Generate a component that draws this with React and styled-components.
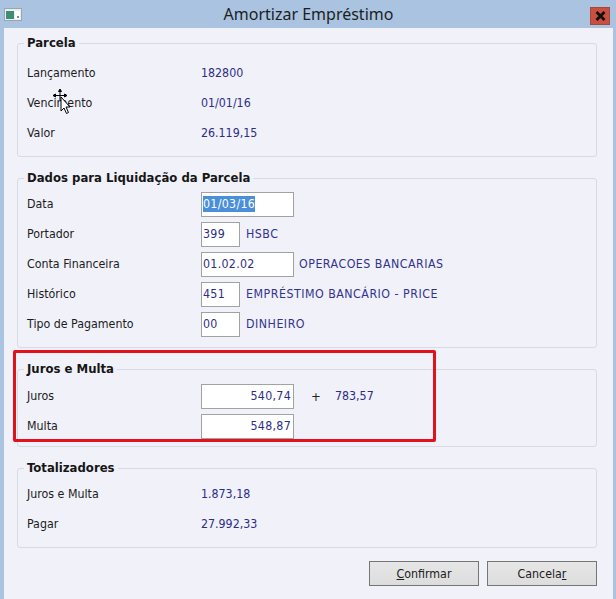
import styled, { createGlobalStyle } from 'styled-components'

const GlobalStyle = createGlobalStyle`
  html, body { margin: 0; padding: 0; background: #f0f1f9; }
`

const Window = styled.div`
  position: relative;
  width: 616px;
  height: 599px;
  box-sizing: border-box;
  background: #f0f1f9;
  border-left: 4px solid #a9c3e1;
  border-right: 3px solid #a9c3e1;
  display: flex;
  flex-direction: column;
  font-family: "DejaVu Sans Condensed", "DejaVu Sans", sans-serif;
  font-size: 12.3px;
  color: #1c1c1c;
  overflow: hidden;
`

const TitleBar = styled.div`
  height: 28px;
  background: #a9c3e1;
  display: grid;
  grid-template-columns: 26px 1fr 26px;
  align-items: center;
`

const Title = styled.div`
  text-align: center;
  font-family: "Noto Sans", "Open Sans", sans-serif;
  font-size: 16px;
  color: #1e1e1e;
  line-height: 28px;
`

const CloseBtn = styled.div`
  justify-self: end;
  margin-right: 3px;
  width: 20px;
  height: 18px;
  margin-top: 4px;
  box-sizing: border-box;
  background: #c9503f;
  border: 1px solid #a8463a;
  display: flex;
  align-items: center;
  justify-content: center;
`

const Content = styled.div`
  padding: 7px 16px 0 13px;
  display: flex;
  flex-direction: column;
  gap: 13px;
`

const Group = styled.fieldset`
  margin: 0;
  min-width: 0;
  padding: ${p => p.$pt}px 9px ${p => p.$pb}px;
  border: 1px solid #d8dae4;
  border-radius: 3px;
`

const Legend = styled.legend`
  padding: 0 3px;
  margin-left: -3px;
  font-weight: bold;
  font-size: 13px;
  line-height: 16px;
  color: #161616;
`

const Row = styled.div`
  display: flex;
  align-items: center;
  height: 30px;
`

const Label = styled.span`
  width: 174px;
  flex: none;
`

const Value = styled.span`
  color: #2d2d86;
`

const Box = styled.div`
  width: ${p => (p.$wide ? 93 : 39)}px;
  height: 25px;
  box-sizing: border-box;
  background: #ffffff;
  border: 1px solid #a2a2a2;
  padding: 0 2px 0 1px;
  display: flex;
  align-items: center;
  justify-content: ${p => (p.$right ? 'flex-end' : 'flex-start')};
  color: #2d2d86;
  letter-spacing: 0.3px;
`

const Selected = styled.span`
  background: #4a8fd8;
  color: #ffffff;
  line-height: 16px;
`

const Desc = styled.span`
  margin-left: ${p => p.$gap || 6}px;
  color: #33338e;
  letter-spacing: 0.5px;
`

const Plus = styled.span`
  margin-left: 17px;
  width: 24px;
  font-size: 13px;
  color: #222;
`

const ButtonRow = styled.div`
  display: flex;
  justify-content: flex-end;
  gap: 8px;
`

const Button = styled.button`
  width: 110px;
  height: 25px;
  box-sizing: border-box;
  background: linear-gradient(#e6e6e6, #dddddd);
  border: 1px solid #767676;
  border-radius: 0;
  font-family: inherit;
  font-size: 12.3px;
  color: #202020;
  padding: 0;
`

const Annotation = styled.div`
  position: absolute;
  left: 9px;
  top: 350px;
  width: 423px;
  height: 92px;
  box-sizing: border-box;
  border: 3px solid #e2121c;
  border-radius: 2px;
  pointer-events: none;
`

const Cursor = styled.svg`
  position: absolute;
  left: 46px;
  top: 88px;
  pointer-events: none;
`

const AppIcon = () => (
  <svg width="18" height="13" viewBox="0 0 18 13">
    <rect x="0.5" y="0.5" width="17" height="12" fill="#e9eef2" stroke="#9aa6ae" />
    <rect x="2" y="3" width="8" height="8" fill="#3e8d74" />
    <rect x="11" y="3" width="5" height="8" fill="#ffffff" />
    <rect x="13" y="8" width="2" height="2" fill="#7e8f98" />
  </svg>
)

const CloseIcon = () => (
  <svg width="11" height="10" viewBox="0 0 11 10">
    <path d="M1.5 1 L9.5 9 M9.5 1 L1.5 9" stroke="#111" strokeWidth="2.8" />
  </svg>
)

const MoveCursor = () => (
  <Cursor width="22" height="28" viewBox="0 0 22 28">
    <g stroke="#000" strokeWidth="1" fill="#000">
      <path d="M10 3 V12 M5 7.5 H15" fill="none" />
      <path d="M10 1 L8.5 3.5 H11.5 Z M3 7.5 L5.5 6 V9 Z M17 7.5 L14.5 6 V9 Z" />
    </g>
    <path d="M11 9 V23 L14 20 L16.5 25.5 L18.5 24.5 L16 19 H20 Z" fill="#fff" stroke="#000" strokeWidth="1" />
  </Cursor>
)

const parcela = [
  ['Lançamento', '182800'],
  ['Vencimento', '01/01/16'],
  ['Valor', '26.119,15'],
]

const liquidacao = [
  ['Portador', '399', 'HSBC', false],
  ['Conta Financeira', '01.02.02', 'OPERACOES BANCARIAS', true],
  ['Histórico', '451', 'EMPRÉSTIMO BANCÁRIO - PRICE', false],
  ['Tipo de Pagamento', '00', 'DINHEIRO', false],
]

const totais = [
  ['Juros e Multa', '1.873,18'],
  ['Pagar', '27.992,33'],
]

const App = () => {
  return (
    <Window>
      <GlobalStyle />
      <TitleBar>
        <AppIcon />
        <Title>Amortizar Empréstimo</Title>
        <CloseBtn><CloseIcon /></CloseBtn>
      </TitleBar>
      <Content>
        <Group $pt={7} $pb={8}>
          <Legend>Parcela</Legend>
          {parcela.map(([l, v]) => (
            <Row key={l}><Label>{l}</Label><Value>{v}</Value></Row>
          ))}
        </Group>

        <Group $pt={3} $pb={8}>
          <Legend>Dados para Liquidação da Parcela</Legend>
          <Row>
            <Label>Data</Label>
            <Box $wide><Selected>01/03/16</Selected></Box>
          </Row>
          {liquidacao.map(([l, code, desc, wide]) => (
            <Row key={l}>
              <Label>{l}</Label>
              <Box $wide={wide}>{code}</Box>
              <Desc $gap={wide ? 5 : 6}>{desc}</Desc>
            </Row>
          ))}
        </Group>

        <Group $pt={4} $pb={5}>
          <Legend>Juros e Multa</Legend>
          <Row>
            <Label>Juros</Label>
            <Box $wide $right>540,74</Box>
            <Plus>+</Plus>
            <Value>783,57</Value>
          </Row>
          <Row>
            <Label>Multa</Label>
            <Box $wide $right>548,87</Box>
          </Row>
        </Group>

        <Group $pt={3} $pb={8}>
          <Legend>Totalizadores</Legend>
          {totais.map(([l, v]) => (
            <Row key={l}><Label>{l}</Label><Value>{v}</Value></Row>
          ))}
        </Group>

        <ButtonRow>
          <Button><u>C</u>onfirmar</Button>
          <Button>Cancela<u>r</u></Button>
        </ButtonRow>
      </Content>
      <Annotation />
      <MoveCursor />
    </Window>
  )
}

export default App
